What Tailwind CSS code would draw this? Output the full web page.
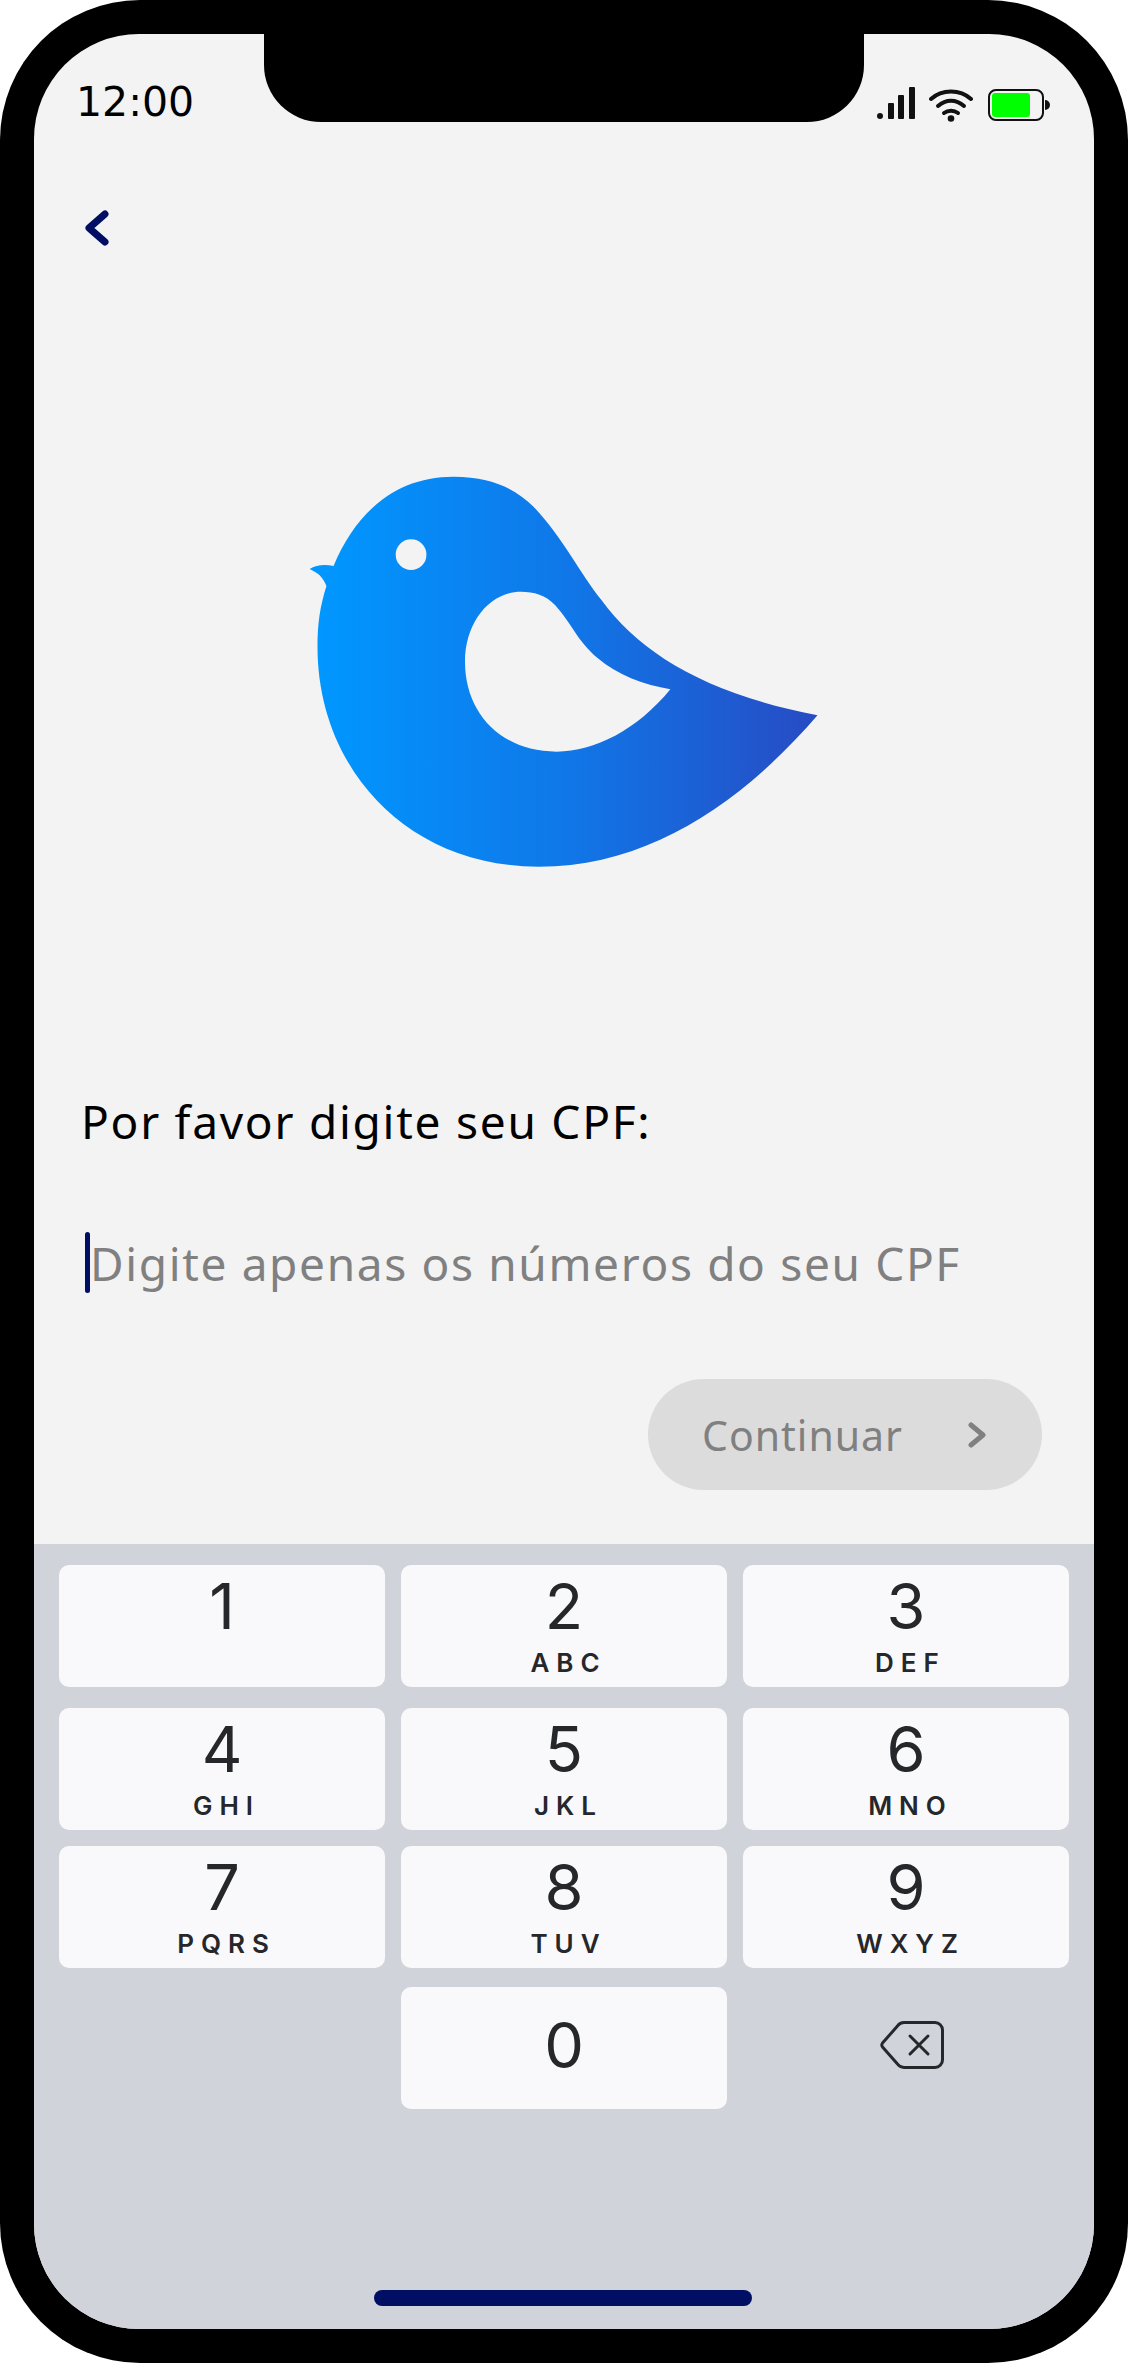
<!DOCTYPE html>
<html lang="en">
<head>
<meta charset="UTF-8">
<script src="https://cdn.jsdelivr.net/npm/@tailwindcss/browser@4"></script>
<title>CPF</title>
</head>
<body class="bg-white">
<div class="w-[1128px] h-[2363px] bg-black rounded-[140px] p-[34px] font-['Noto_Sans',sans-serif]">
	<div class="relative w-[1060px] h-[2295px] rounded-[105px] overflow-hidden bg-[#f3f3f3] flex flex-col">
		<div class="absolute left-[230px] top-0 w-[600px] h-[88px] bg-black rounded-b-[57px]"></div>
		<div class="h-[1510px] flex flex-col">
			<div class="mt-[53px] ml-[42px] mr-[44px] h-[34px] flex items-start justify-between">
				<span class="font-['DejaVu_Sans',sans-serif] text-[41px] leading-[30px] text-black">12:00</span>
				<div class="flex items-start">
					<svg width="38" height="32" viewBox="0 0 38 32" fill="#111"><rect x="0" y="26" width="6" height="6" rx="3"/><rect x="11" y="16" width="6" height="16" rx="1"/><rect x="21" y="8" width="6" height="24" rx="1"/><rect x="32" y="0" width="6" height="32" rx="1"/></svg>
					<svg class="ml-[14px] mt-[2px]" width="44" height="33" viewBox="0 0 44 33" fill="none" stroke="#111" stroke-width="4" stroke-linecap="round"><path d="M2 10C13 0 31 0 42 10"/><path d="M9 17C17 10 27 10 35 17"/><path d="M15 24C19 21 25 21 29 24"/><circle cx="22" cy="29.500" r="3.300" fill="#111" stroke="none"/></svg>
					<div class="ml-[15px] mt-[2px] w-[56px] h-[32px] border-[2.500px] border-[#111] rounded-[8px] pl-[1.500px] pt-[1.500px]"><div class="w-[38px] h-[24px] bg-[#00ff00] rounded-[3px]"></div></div>
					<div class="ml-[1px] mt-[13px] w-[5px] h-[10px] bg-[#111] rounded-r-full"></div>
				</div>
			</div>
			<svg class="mt-[89px] ml-[50px]" width="26" height="36" viewBox="0 0 26 36" fill="none" stroke="#000f63" stroke-width="7" stroke-linecap="round" stroke-linejoin="round"><path d="M21 4L5 18L21 32"/></svg>
			<svg class="mt-[204px] ml-[246px]" width="560" height="450" viewBox="0 0 1568 1350" preserveAspectRatio="none">
				<defs><linearGradient id="bird" gradientUnits="userSpaceOnUse" x1="105" y1="0" x2="1505" y2="0"><stop offset="0" stop-color="#0097ff"/><stop offset="0.5" stop-color="#1077e8"/><stop offset="1" stop-color="#274bc4"/></linearGradient></defs>
				<path fill="url(#bird)" fill-rule="evenodd" d="M83 357C100 345 125 342 150 348C215 180 330 80 485 80C600 80 660 120 710 170C790 260 840 370 900 450C1010 610 1190 730 1505 796C1300 1050 1040 1250 725 1250C350 1250 105 950 105 590C105 520 112 470 130 408C120 380 105 368 83 357ZM675 425C710 425 745 435 770 465C820 525 830 570 890 625C945 675 1020 705 1093 718C1000 840 880 905 775 905C620 905 518 790 518 635C518 520 585 425 675 425Z"/>
				<ellipse cx="367" cy="314" rx="43" ry="46" fill="#f3f3f3"/>
			</svg>
			<p class="mt-[191px] ml-[47px] text-[46px] leading-[60px] tracking-[1.750px] text-black">Por favor digite seu CPF:</p>
			<div class="mt-[81px] ml-[51px] flex items-center">
				<div class="w-[5px] h-[61px] bg-[#000f63] rounded-full"></div>
				<span class="text-[46px] leading-[60px] tracking-[1.650px] text-[#808080]">Digite apenas os números do seu CPF</span>
			</div>
			<div class="mt-[86px] self-end mr-[52px] w-[394px] h-[111px] rounded-full bg-[#dcdcdc] flex items-center pl-[54px]">
				<span class="w-[266px] text-[41px] leading-[60px] tracking-[1px] text-[#808080]">Continuar</span>
				<svg width="18" height="26" viewBox="0 0 18 26" fill="none" stroke="#808080" stroke-width="5" stroke-linecap="round" stroke-linejoin="round"><path d="M3 3L15 13L3 23"/></svg>
			</div>
		</div>
		<div class="flex-1 bg-[#d0d3da] pl-[25px] pt-[21px] relative font-['Inter',sans-serif] text-[#26272b]">
			<div class="flex gap-[16px]">
				<div class="w-[326px] h-[122px] bg-[#f9f9fb] rounded-[10px] flex flex-col items-center pt-[18px]"><span class="text-[63px] leading-[46px]">1</span></div>
				<div class="w-[326px] h-[122px] bg-[#f9f9fb] rounded-[10px] flex flex-col items-center pt-[18px]"><span class="text-[63px] leading-[46px]">2</span><span class="mt-[24px] pl-[9px] text-[26px] font-semibold tracking-[7px] leading-[19px]">ABC</span></div>
				<div class="w-[326px] h-[122px] bg-[#f9f9fb] rounded-[10px] flex flex-col items-center pt-[18px]"><span class="text-[63px] leading-[46px]">3</span><span class="mt-[24px] pl-[9px] text-[26px] font-semibold tracking-[7px] leading-[19px]">DEF</span></div>
			</div>
			<div class="mt-[21px] flex gap-[16px]">
				<div class="w-[326px] h-[122px] bg-[#f9f9fb] rounded-[10px] flex flex-col items-center pt-[18px]"><span class="text-[63px] leading-[46px]">4</span><span class="mt-[24px] pl-[9px] text-[26px] font-semibold tracking-[7px] leading-[19px]">GHI</span></div>
				<div class="w-[326px] h-[122px] bg-[#f9f9fb] rounded-[10px] flex flex-col items-center pt-[18px]"><span class="text-[63px] leading-[46px]">5</span><span class="mt-[24px] pl-[9px] text-[26px] font-semibold tracking-[7px] leading-[19px]">JKL</span></div>
				<div class="w-[326px] h-[122px] bg-[#f9f9fb] rounded-[10px] flex flex-col items-center pt-[18px]"><span class="text-[63px] leading-[46px]">6</span><span class="mt-[24px] pl-[9px] text-[26px] font-semibold tracking-[7px] leading-[19px]">MNO</span></div>
			</div>
			<div class="mt-[16px] flex gap-[16px]">
				<div class="w-[326px] h-[122px] bg-[#f9f9fb] rounded-[10px] flex flex-col items-center pt-[18px]"><span class="text-[63px] leading-[46px]">7</span><span class="mt-[24px] pl-[9px] text-[26px] font-semibold tracking-[7px] leading-[19px]">PQRS</span></div>
				<div class="w-[326px] h-[122px] bg-[#f9f9fb] rounded-[10px] flex flex-col items-center pt-[18px]"><span class="text-[63px] leading-[46px]">8</span><span class="mt-[24px] pl-[9px] text-[26px] font-semibold tracking-[7px] leading-[19px]">TUV</span></div>
				<div class="w-[326px] h-[122px] bg-[#f9f9fb] rounded-[10px] flex flex-col items-center pt-[18px]"><span class="text-[63px] leading-[46px]">9</span><span class="mt-[24px] pl-[9px] text-[26px] font-semibold tracking-[7px] leading-[19px]">WXYZ</span></div>
			</div>
			<div class="mt-[19px] flex gap-[16px]">
				<div class="w-[326px] h-[122px]"></div>
				<div class="w-[326px] h-[122px] bg-[#f9f9fb] rounded-[10px] flex flex-col items-center pt-[35px]"><span class="text-[63px] leading-[46px]">0</span></div>
				<div class="w-[326px] h-[122px] pl-[137px] pt-[34px]">
					<svg width="64" height="48" viewBox="0 0 64 48" fill="none" stroke="#26272b" stroke-width="3" stroke-linejoin="round" stroke-linecap="round"><path d="M24 1.500H55A7.500 7.500 0 0 1 62.500 9V39A7.500 7.500 0 0 1 55 46.500H24A8 8 0 0 1 17.500 43L2.500 26A3.500 3.500 0 0 1 2.500 22L17.500 5A8 8 0 0 1 24 1.500Z"/><path d="M30 15L48 33M48 15L30 33"/></svg>
				</div>
			</div>
			<div class="absolute left-[340px] bottom-[23px] w-[378px] h-[16px] rounded-full bg-[#000f63]"></div>
		</div>
	</div>
</div>
</body>
</html>
